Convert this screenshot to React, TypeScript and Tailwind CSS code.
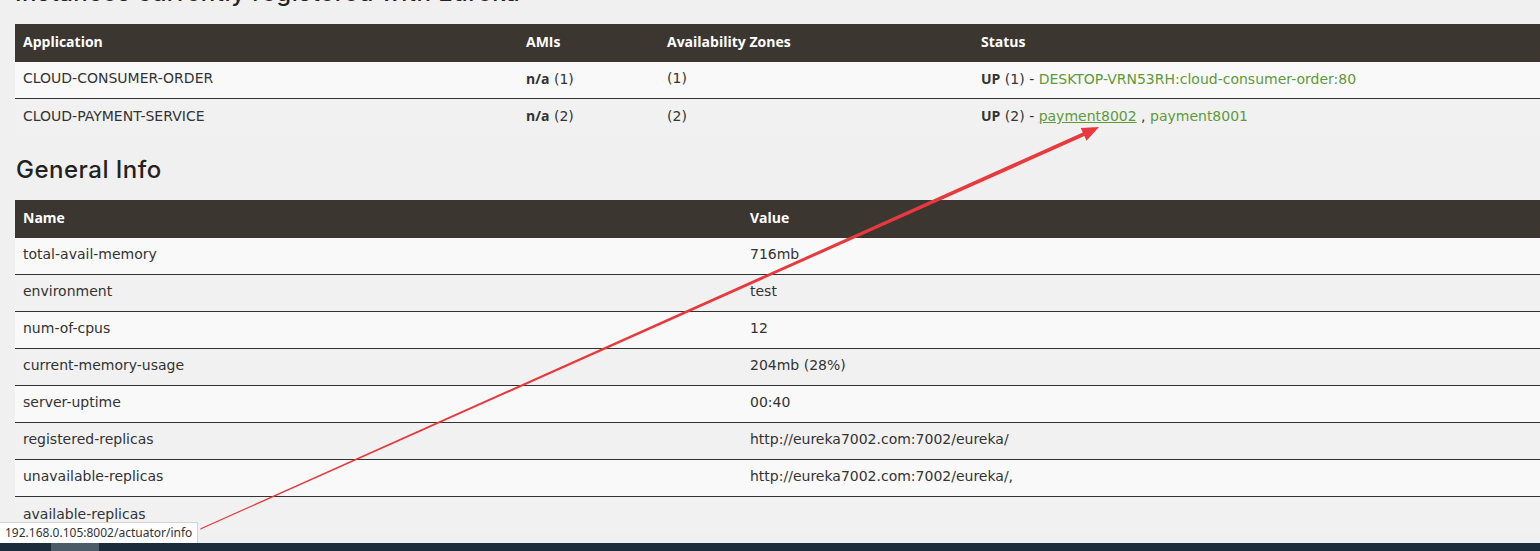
import type { ReactNode } from "react";

type Instance = {
  app: string;
  count: number;
  status: ReactNode;
};

const LINK = "text-[#5e9a3b]";
const BOLD_FONT = { fontFamily: "'Open Sans', 'Liberation Sans', sans-serif" };

const instances: Instance[] = [
  {
    app: "CLOUD-CONSUMER-ORDER",
    count: 1,
    status: <a className={LINK}>DESKTOP-VRN53RH:cloud-consumer-order:80</a>,
  },
  {
    app: "CLOUD-PAYMENT-SERVICE",
    count: 2,
    status: (
      <>
        <a className={`${LINK} underline`}>payment8002</a> , <a className={LINK}>payment8001</a>
      </>
    ),
  },
];

const generalInfo: [string, string][] = [
  ["total-avail-memory", "716mb"],
  ["environment", "test"],
  ["num-of-cpus", "12"],
  ["current-memory-usage", "204mb (28%)"],
  ["server-uptime", "00:40"],
  ["registered-replicas", "http://eureka7002.com:7002/eureka/"],
  ["unavailable-replicas", "http://eureka7002.com:7002/eureka/,"],
  ["available-replicas", ""],
];

function rowBg(i: number) {
  return i % 2 === 0 ? "bg-[#f9f9f9]" : "bg-[#f1f1f1]";
}

function Heading({ children, className }: { children: ReactNode; className?: string }) {
  return (
    <h2
      className={`text-[24px] leading-[28px] tracking-[0.5px] text-[#222] font-medium ${className ?? ""}`}
      style={{ fontFamily: "Inter, 'Liberation Sans', sans-serif" }}
    >
      {children}
    </h2>
  );
}

function B({ children }: { children: ReactNode }) {
  return (
    <b className="font-bold" style={BOLD_FONT}>
      {children}
    </b>
  );
}

function HeaderRow({ children }: { children: ReactNode }) {
  return (
    <div
      className="flex h-[38px] items-center pb-[3px] bg-[#3c3631] text-white font-bold text-[14px]"
      style={BOLD_FONT}
    >
      {children}
    </div>
  );
}

function InstancesTable() {
  return (
    <div className="w-full">
      <HeaderRow>
        <div className="w-[503px] pl-2">Application</div>
        <div className="w-[141px] pl-2">AMIs</div>
        <div className="w-[314px] pl-2">Availability Zones</div>
        <div className="flex-1 pl-2">Status</div>
      </HeaderRow>
      {instances.map((row, i) => (
        <div
          key={row.app}
          className={`flex h-[37px] items-center pb-[3px] ${rowBg(i)} ${
            i < instances.length - 1 ? "border-b border-[#333]" : ""
          }`}
        >
          <div className="w-[503px] pl-2">{row.app}</div>
          <div className="w-[141px] pl-2">
            <B>n/a</B> ({row.count})
          </div>
          <div className="w-[314px] pl-2">({row.count})</div>
          <div className="flex-1 pl-2">
            <B>UP</B> ({row.count}) - {row.status}
          </div>
        </div>
      ))}
    </div>
  );
}

function GeneralInfoTable() {
  return (
    <div className="w-full">
      <HeaderRow>
        <div className="w-[727px] pl-2">Name</div>
        <div className="flex-1 pl-2">Value</div>
      </HeaderRow>
      {generalInfo.map(([name, value], i) => (
        <div
          key={name}
          className={`flex h-[37px] items-center pb-[3px] ${rowBg(i)} ${
            i < generalInfo.length - 1 ? "border-b border-[#333]" : ""
          }`}
        >
          <div className="w-[727px] pl-2">{name}</div>
          <div className="flex-1 pl-2">{value}</div>
        </div>
      ))}
    </div>
  );
}

// red annotation arrow pointing at the hovered link
function Arrow() {
  return (
    <svg className="absolute inset-0 pointer-events-none" width="1540" height="551">
      <polygon
        fill="#e8393c"
        points="200,529.7 200.6,528.3 1082.8,132.5 1080.7,127.9 1099,127 1086.5,140.7 1084.4,136.1"
      />
    </svg>
  );
}

export default function App() {
  return (
    <div
      className="relative h-[551px] w-[1540px] overflow-hidden bg-[#f0f0f0] text-[14px] text-[#333] flex flex-col"
      style={{ fontFamily: "'DejaVu Sans', Verdana, sans-serif" }}
    >
      <div className="flex-1 pl-[15px] overflow-hidden">
        <Heading className="-mt-[21px] mb-[17px]">Instances currently registered with Eureka</Heading>
        <InstancesTable />
        <Heading className="mt-[20px] mb-[16px] pl-px">General Info</Heading>
        <GeneralInfoTable />
      </div>

      {/* taskbar strip */}
      <div className="flex h-[8px] shrink-0 bg-[#1d2c3b]">
        <div className="w-[51px]" />
        <div className="w-[48px] bg-[#4b5b67]" />
      </div>

      {/* browser status bubble */}
      <div
        className="absolute left-0 bottom-[8px] h-[21px] px-[5px] flex items-center bg-white border-t border-r border-[#d4d4d4] text-[12px] text-[#333]"
        style={{ fontFamily: "'Noto Sans', 'Liberation Sans', sans-serif" }}
      >
        192.168.0.105:8002/actuator/info
      </div>

      <Arrow />
    </div>
  );
}
